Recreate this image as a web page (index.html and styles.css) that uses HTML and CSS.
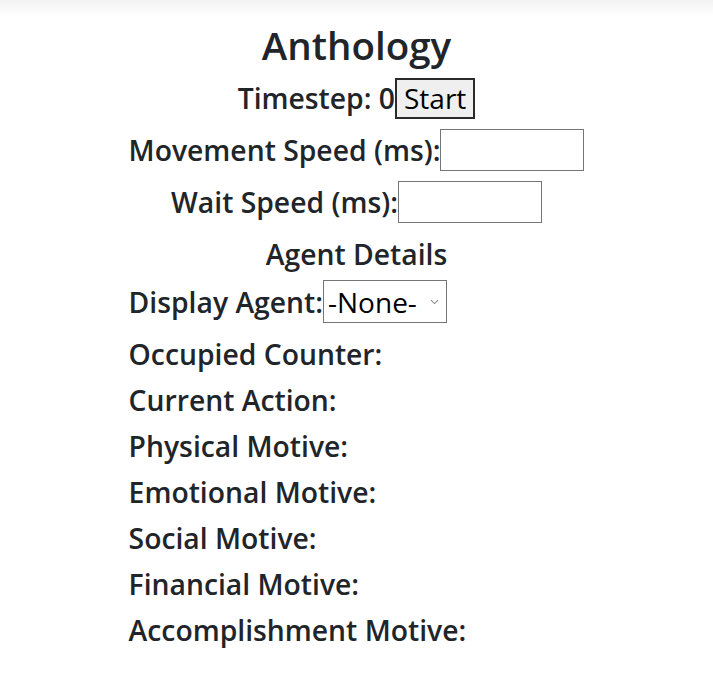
FILE: index.html
```html
<!DOCTYPE html>
<html>
<head>
<meta charset="utf-8">
<link rel="stylesheet" href="styles.css">
</head>
<body>
<div class="app">
  <h1 class="title">Anthology</h1>
  <div class="panel">
    <div class="row center">
      <span class="label">Timestep: 0</span><button class="btn">Start</button>
    </div>
    <div class="row center">
      <span class="label">Movement Speed (ms):</span><input class="field" type="text">
    </div>
    <div class="row center">
      <span class="label">Wait Speed (ms):</span><input class="field" type="text">
    </div>
    <div class="row center heading">Agent Details</div>
    <div class="row agent">
      <span class="label">Display Agent:</span><span class="select">-None-<svg class="chev" width="9" height="6" viewBox="0 0 9 6"><path d="M1 1.2 4.5 4.6 8 1.2" fill="none" stroke="#8a8a8a" stroke-width="1.1"/></svg></span>
    </div>
    <div class="detail">Occupied Counter:</div>
    <div class="detail">Current Action:</div>
    <div class="detail">Physical Motive:</div>
    <div class="detail">Emotional Motive:</div>
    <div class="detail">Social Motive:</div>
    <div class="detail">Financial Motive:</div>
    <div class="detail">Accomplishment Motive:</div>
  </div>
</div>
</body>
</html>
```
FILE: styles.css
```css
html, body {
  margin: 0;
  padding: 0;
}
body {
  background: linear-gradient(#f2f2f2, #ffffff 16px) no-repeat;
  background-color: #fff;
  color: #212529;
  font-family: "Open Sans", "Noto Sans", sans-serif;
  font-weight: 600;
  font-size: 28.3px;
}
.app {
  display: flex;
  flex-direction: column;
  align-items: center;
  padding-top: 21px;
}
.title {
  margin: 0;
  font-size: 38.5px;
  font-weight: 600;
  line-height: 48px;
}
.panel {
  display: flex;
  flex-direction: column;
  width: fit-content;
  margin-top: 8px;
}
.row {
  display: flex;
  align-items: center;
  height: 42px;
  margin-bottom: 10px;
}
.row.center {
  justify-content: center;
}
.heading {
  height: 42px;
  margin-bottom: 5px;
}
.agent {
  height: 43px;
  margin-bottom: 8px;
}
.label {
  white-space: nowrap;
}
.btn {
  font-family: "Open Sans", sans-serif;
  font-weight: 400;
  font-size: 28px;
  color: #000;
  background: #efefef;
  border: 2px solid #2b2b2b;
  height: 41px;
  padding: 0 7px;
  line-height: 1;
}
.field {
  width: 144px;
  height: 42px;
  box-sizing: border-box;
  border: 1px solid #767676;
  padding: 0;
  margin: 0;
}
.select {
  display: flex;
  align-items: center;
  justify-content: space-between;
  box-sizing: border-box;
  width: 124px;
  height: 43px;
  border: 1px solid #767676;
  color: #000;
  font-weight: 400;
  font-size: 28px;
  padding: 0 7px 0 4px;
}
.chev {
  flex: none;
}
.detail {
  height: 46px;
  line-height: 46px;
  white-space: nowrap;
}
```
